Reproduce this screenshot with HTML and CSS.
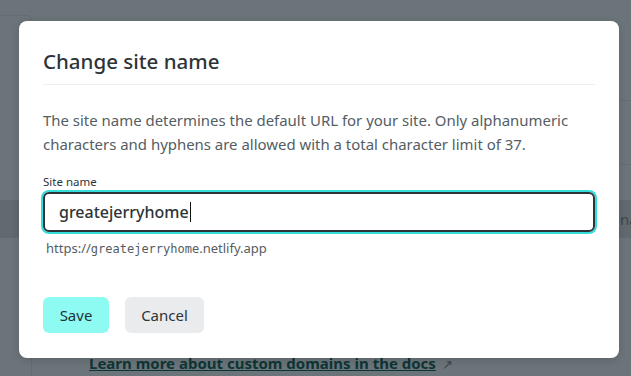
FILE: index.html
```html
<!DOCTYPE html>
<html>
<head>
<meta charset="utf-8">
<link rel="stylesheet" href="styles.css">
</head>
<body>
<div class="page">
  <div class="card-top"></div>
  <div class="row-band"><span class="band-text">na</span></div>
  <div class="right-lines"></div>
  <div class="docs-row">
    <a class="docs-link" href="#">Learn more about custom domains in the docs</a><span class="arrow">↗</span>
  </div>
</div>
<div class="overlay">
  <div class="modal">
    <h2 class="title">Change site name</h2>
    <p class="desc">The site name determines the default URL for your site. Only alphanumeric characters and hyphens are allowed with a total character limit of 37.</p>
    <label class="label">Site name</label>
    <div class="input"><span class="value">greatejerryhome</span><span class="caret"></span></div>
    <div class="help">https://<span class="mono">greatejerryhome</span>.netlify.app</div>
    <div class="actions">
      <button class="btn btn-save">Save</button>
      <button class="btn btn-cancel">Cancel</button>
    </div>
  </div>
</div>
</body>
</html>
```
FILE: styles.css
```css
* { box-sizing: border-box; }
html, body { margin: 0; padding: 0; overflow: hidden; }
body {
  width: 631px;
  height: 376px;
  background: #6b7479;
  font-family: "Noto Sans", "Open Sans", sans-serif;
  position: relative;
}
.page {
  position: relative;
  height: 376px;
  overflow: hidden;
}
.card-top {
  position: absolute;
  left: -10px; top: 15px;
  width: 42px; height: 400px;
  border: 1px solid #646d72;
  border-radius: 6px;
}
.row-band {
  position: absolute;
  left: 0; top: 200px;
  width: 631px; height: 38px;
  background: #616a6f;
  overflow: hidden;
}
.band-text {
  position: absolute;
  left: 620px; top: 9px;
  font-size: 15px;
  line-height: 20px;
  color: #3e474c;
}
.right-lines {
  position: absolute;
  left: 610px; top: 100px;
  width: 30px; height: 65px;
  border-top: 1px solid #646d72;
  border-bottom: 1px solid #646d72;
}
.docs-row {
  position: absolute;
  left: 89px; top: 353px;
  font-size: 15px;
  line-height: 20px;
  font-weight: 700;
  white-space: nowrap;
}
.docs-link {
  color: #0e3535;
  text-decoration: underline;
}
.arrow {
  color: #3e474c;
  font-weight: 400;
  font-size: 13px;
  margin-left: 6px;
}
.overlay {
  position: absolute;
  inset: 0;
  padding: 21px 0 0 19px;
}
.modal {
  width: 600px;
  height: 337px;
  background: #fff;
  border-radius: 8px;
  padding: 24px 24px 0 24px;
  display: flex;
  flex-direction: column;
  box-shadow: 0 2px 8px rgba(0,0,0,0.15);
}
.title {
  margin: 0;
  font-size: 20.5px;
  font-weight: 500;
  color: #2d3438;
  line-height: 32px;
  padding-bottom: 7px;
  border-bottom: 1px solid #eceef0;
}
.desc {
  margin: 23px 0 0 0;
  font-size: 14.95px;
  line-height: 24px;
  color: #545d63;
}
.label {
  margin-top: 18px;
  font-size: 11.5px;
  line-height: 16px;
  color: #2d3438;
}
.input {
  margin-top: 2px;
  height: 40px;
  border: 2px solid #2d3438;
  border-radius: 6px;
  box-shadow: 0 0 0 2px #34dcdc;
  padding: 0 14px;
  display: flex;
  align-items: center;
}
.value {
  font-size: 16px;
  font-weight: 500;
  color: #2d3438;
}
.caret {
  display: inline-block;
  width: 1px;
  height: 20px;
  background: #111;
  margin-left: 1px;
}
.help {
  margin-top: 7px;
  padding-left: 3px;
  font-size: 13px;
  line-height: 18px;
  color: #545d63;
}
.mono {
  font-family: "DejaVu Sans Mono", monospace;
  font-size: 12px;
}
.actions {
  margin-top: 39px;
  display: flex;
  gap: 16px;
}
.btn {
  height: 36px;
  border: none;
  border-radius: 6px;
  font-family: inherit;
  font-size: 15px;
  padding: 0;
  color: #1e3236;
}
.btn-save { background: #8efbf3; width: 66px; }
.btn-cancel { background: #e9ebed; width: 79px; color: #2d3438; }
```
